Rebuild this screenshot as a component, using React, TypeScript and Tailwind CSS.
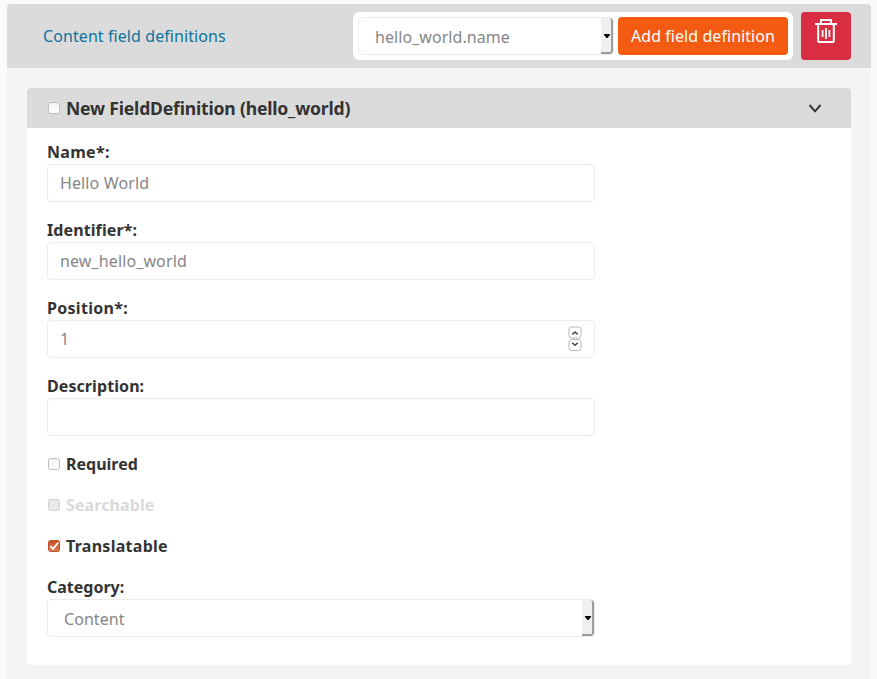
import type { ReactNode } from "react";

function Check({ state = "off" }: { state?: "off" | "on" | "disabled" }) {
  return (
    <svg width="14" height="14" viewBox="0 0 14 14" className="shrink-0">
      <defs>
        <linearGradient id="box-off" x1="0" y1="0" x2="0" y2="1">
          <stop offset="0" stopColor="#f1f1f1" />
          <stop offset="1" stopColor="#ffffff" />
        </linearGradient>
        <linearGradient id="box-on" x1="0" y1="0" x2="0" y2="1">
          <stop offset="0" stopColor="#c9501f" />
          <stop offset="1" stopColor="#dc7a50" />
        </linearGradient>
      </defs>
      {state === "off" && (
        <rect x="1.5" y="1.5" width="11" height="11" rx="2" fill="url(#box-off)" stroke="#c0c0c0" />
      )}
      {state === "disabled" && (
        <rect x="1.5" y="1.5" width="11" height="11" rx="2" fill="#e9e9e9" stroke="#d3d3d3" />
      )}
      {state === "on" && (
        <>
          <rect x="1.5" y="1.5" width="11" height="11" rx="2" fill="url(#box-on)" stroke="#b5532c" />
          <path d="M3.3 7 6 9.8 11.3 3.6" fill="none" stroke="#fff" strokeWidth="1.8" />
        </>
      )}
    </svg>
  );
}

function Select({ value, className }: { value: string; className: string }) {
  return (
    <div className={`flex h-[38px] items-center justify-between overflow-hidden rounded border border-[#ececec] bg-white text-[#868686] ${className}`}>
      <span className="pt-0.5 tracking-[0.06px]">{value}</span>
      <span className="flex h-full w-3 shrink-0 items-center justify-end rounded-r-[3px] border-r-2 border-b-2 border-[#9d9d9b] bg-[#f0f0ee] pt-px">
        <svg width="8" height="4" viewBox="0 0 8 4" className="shrink-0">
          <path d="M1 0h6v1L4.5 4h-1L1 1z" fill="#000" />
        </svg>
      </span>
    </div>
  );
}

function Spinner() {
  return (
    <svg width="14" height="26" viewBox="0 0 14 26">
      <rect x="1" y="1" width="12" height="11" rx="2.5" fill="#fff" stroke="#b9b9b9" />
      <rect x="1" y="13.5" width="12" height="11" rx="2.5" fill="#fff" stroke="#b9b9b9" />
      <path d="M4.2 8.5 7 6l2.8 2.5M4.2 16.7 7 19.2l2.8-2.5" fill="none" stroke="#444" strokeWidth="1.5" />
    </svg>
  );
}

interface FieldProps {
  label: string;
  value: string;
  labelClass: string;
  children?: ReactNode;
}

function Field({ label, value, labelClass, children }: FieldProps) {
  return (
    <div className="mb-4">
      <div className={`h-6 font-bold ${labelClass}`}>{label}</div>
      <div className="flex h-[38px] items-center justify-between rounded border border-[#ececec] px-3 text-[#868686]">
        <span className="tracking-[0.12px]">{value}</span>
        {children}
      </div>
    </div>
  );
}

interface CheckRowProps {
  label: string;
  state: "off" | "on" | "disabled";
  labelClass?: string;
}

function CheckRow({ label, state, labelClass = "" }: CheckRowProps) {
  return (
    <div className={`mb-[17px] flex h-6 items-center gap-[5px] font-bold ${state === "disabled" ? "text-[#dadada]" : ""}`}>
      <Check state={state} />
      <span className={labelClass}>{label}</span>
    </div>
  );
}

export default function App() {
  return (
    <div className="h-[679px] overflow-hidden bg-[#fafafa] pt-1 pr-1.5 pl-[7px] font-['Noto_Sans',sans-serif] text-base leading-6 text-[#333]">
      <div className="h-full overflow-hidden rounded-t bg-[#f4f4f4]">
        <header className="flex h-16 items-center justify-between bg-[#dbdbdb] pr-5 pl-9">
          <span className="tracking-[0.08px] text-[#0d74a0]">Content field definitions</span>
          <div className="flex gap-2">
            <div className="flex h-12 w-[440px] items-center gap-1 rounded-md bg-white pl-[5px]">
              <Select value="hello_world.name" className="w-64 pl-4" />
              <button className="h-[38px] w-[170px] rounded bg-[#f35b12] tracking-[0.06px] whitespace-nowrap text-white">
                Add field definition
              </button>
            </div>
            <button className="flex h-12 w-[50px] justify-center rounded bg-[#d92d42] pt-[7px]">
              <svg width="22" height="24" viewBox="0 0 22 24" fill="none" stroke="#fff">
                <path d="M0 5h22M6 5V1h10v4" strokeWidth="1.9" />
                <path d="M3.2 5v17q0 1 1 1h13.6q1 0 1-1V5" strokeWidth="2" />
                <path d="M7.6 11v7M11 9v11M14.4 11v7" strokeWidth="1.8" />
              </svg>
            </button>
          </div>
        </header>
        <section className="mx-5 mt-5 h-[577px] overflow-hidden rounded bg-white">
          <div className="flex h-10 items-center justify-between bg-[#dbdbdb] pr-[29px] pl-5">
            <div className="flex items-center gap-[5px] text-[17.6px] font-bold tracking-[-0.2px]">
              <Check />
              New FieldDefinition (hello_world)
            </div>
            <svg width="14" height="10" viewBox="0 0 14 10" className="mt-0.5">
              <path d="M1.5 1 7 7.3 12.5 1" fill="none" stroke="#333" strokeWidth="2" />
            </svg>
          </div>
          <div className="w-[568px] pt-3 pl-5">
            <Field label="Name*:" value="Hello World" labelClass="tracking-[0.3px]" />
            <Field label="Identifier*:" value="new_hello_world" labelClass="tracking-[0.1px]" />
            <Field label="Position*:" value="1" labelClass="tracking-[0.3px]">
              <Spinner />
            </Field>
            <Field label="Description:" value="" labelClass="tracking-[0.08px]" />
            <CheckRow label="Required" state="off" />
            <CheckRow label="Searchable" state="disabled" labelClass="tracking-[0.1px]" />
            <CheckRow label="Translatable" state="on" labelClass="tracking-[0.28px]" />
            <div className="h-6 font-bold">Category:</div>
            <Select value="Content" className="w-[548px] pl-4" />
          </div>
        </section>
      </div>
    </div>
  );
}
